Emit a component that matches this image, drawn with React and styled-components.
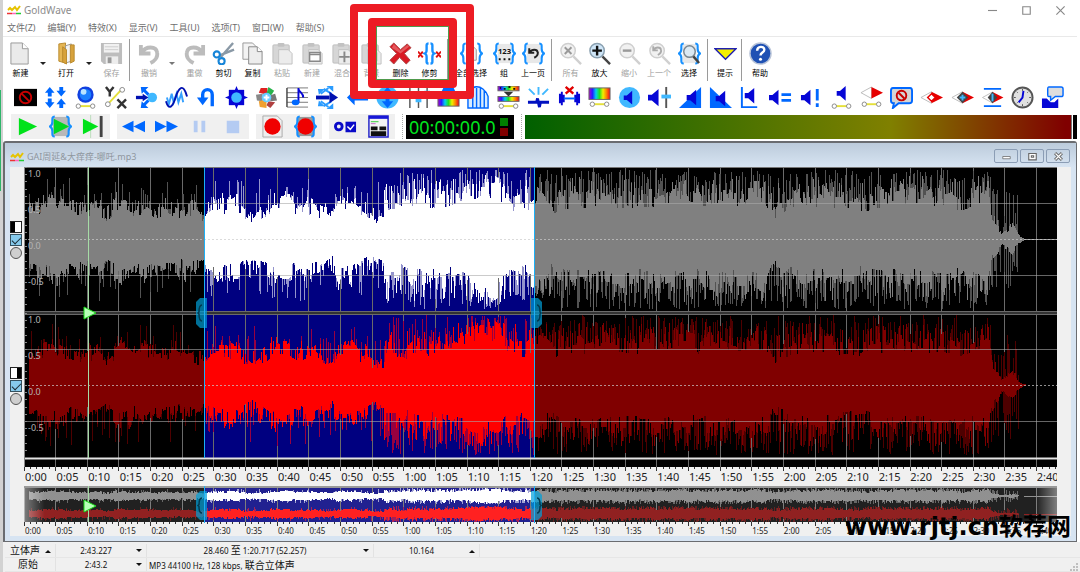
import React from 'react';
import styled, { createGlobalStyle } from 'styled-components';

const GlobalStyle = createGlobalStyle`
  * {
    box-sizing: border-box;
  }
  body {
    margin: 0;
    background: #fff;
    font-family: 'Noto Sans', 'Noto Sans CJK SC', sans-serif;
  }
  button, input {
    margin: 0;
    padding: 0;
    border: 0;
    background: none;
    font: inherit;
    color: inherit;
  }
`;

const Shell = styled.div`
  position: relative;
  display: flex;
  flex-direction: column;
  min-height: 100vh;
  padding-right: 3px;
  border-left: 3px solid #d2d2d2;
  background: #fff;
`;

const GreenEdge = styled.div`
  position: absolute;
  left: -3px;
  top: 90px;
  width: 1px;
  height: 101px;
  background: #2fb56a;
`;

const TitleBar = styled.header`
  display: flex;
  align-items: center;
  height: 20px;
  padding-left: 4px;
  color: #8c8c8c;
  font-size: 10px;
  line-height: 12px;
`;

const AppName = styled.span`
  flex: 1;
  padding-left: 3px;
`;

const CaptionButton = styled.button`
  display: flex;
  align-items: center;
  justify-content: center;
  width: 34px;
  height: 20px;
`;

const MenuBar = styled.nav`
  display: flex;
  gap: 12px;
  height: 17px;
  padding-left: 4px;
  border-bottom: 1px solid #e9e9e9;
  color: #6e6e6e;
  font-size: 9px;
  line-height: 16px;
`;

const MainTools = styled.div`
  display: flex;
  height: 46px;
  padding: 2px 3px;
`;

const Tool = styled.button`
  display: flex;
  flex-direction: column;
  align-items: center;
  gap: 3px;
  flex: none;
  width: ${p => p.$w}px;
  padding-top: 3px;
  color: ${p => (p.disabled ? '#a0a0a0' : '#000')};
  font-size: 8px;
  line-height: 10px;
  white-space: nowrap;
`;

const DropArrow = styled.button`
  flex: none;
  width: 16px;
  color: ${p => (p.disabled ? '#777' : '#222')};
`;

const Separator = styled.div`
  flex: none;
  width: 1px;
  height: 42px;
  margin: 0 4px 0 3px;
  background: #9a9a9a;
`;

const EffectTools = styled.div`
  display: grid;
  grid-template-columns: repeat(35, minmax(0, 1fr));
  height: 29px;
  padding: 0 9px 0 7px;
`;

const EffectButton = styled.button`
  display: flex;
  align-items: center;
  justify-content: center;
`;

const Transport = styled.div`
  display: flex;
  align-items: center;
  height: 29px;
  padding-left: 8px;
`;

const Group = styled.div`
  display: flex;
  flex: none;
  height: 25px;
  margin-right: 7px;
  background: #f0f0f0;
`;

const PlayButton = styled.button`
  display: flex;
  align-items: center;
  justify-content: center;
  width: 33px;
`;

const Grip = styled.div`
  flex: none;
  height: 25px;
  margin-right: 3px;
  border-left: 1px dotted #aaa;
`;

const Timer = styled.div`
  display: flex;
  align-items: center;
  justify-content: space-between;
  flex: none;
  width: 108px;
  height: 24px;
  margin-right: 7px;
  padding: 0 6px 0 3px;
  background: #000;
  color: #00e61e;
  font-size: 18px;
  line-height: 24px;
`;

const Lamps = styled.div`
  display: grid;
  gap: 2px;
`;

const Lamp = styled.i`
  width: 8px;
  height: 8px;
  background: ${p => p.$color};
`;

const Meter = styled.div`
  flex: 1;
  height: 24px;
  border-right: 1px solid #777;
  background: linear-gradient(90deg, #006000 0%, #808000 67%, #800000 99%);
`;

const ClipLamp = styled.div`
  width: 4px;
  height: 24px;
  margin-left: 1px;
  background: #000;
`;

const Child = styled.main`
  padding: 0 5px 5px;
  border: 2px solid #6a6c70;
  border-width: 2px 1px 1px 2px;
  border-radius: 3px 3px 0 0;
  background: #d7e4f2;
`;

const ChildTitle = styled.div`
  display: flex;
  align-items: center;
  height: 24px;
  margin: 0 -5px;
  padding: 4px 6px 0 5px;
  background: linear-gradient(#bccbdb, #d7e4f2);
  color: #8f969e;
  font-size: 9px;
  line-height: 12px;
`;

const FileName = styled.span`
  flex: 1;
  padding-left: 3px;
`;

const ChildButtons = styled.div`
  display: flex;
  gap: 2px;
  padding-bottom: 2px;
`;

const ChildButton = styled.button`
  display: flex;
  align-items: center;
  justify-content: center;
  width: 24px;
  height: 14px;
  border: 1px solid #8b9db5;
  border-radius: 2px;
`;

const Editor = styled.div`
  display: flex;
  padding-right: 14px;
  background: #f0f0f0;
`;

const Gutter = styled.div`
  flex: none;
  width: 14px;
`;

const ChannelSwitch = styled.div`
  display: flex;
  flex-direction: column;
  align-items: flex-start;
  justify-content: center;
  gap: 1px;
  height: 146px;
`;

const PanButton = styled.button`
  width: 12px;
  height: 12px;
  border: 1px solid #222;
  background: linear-gradient(90deg, ${p => p.$fill});
`;

const Check = styled.input`
  display: block;
  appearance: none;
  width: 12px;
  height: 12px;
  border: 1px solid #34505e;
  background: #86caec;
  &:checked::after {
    content: '';
    display: block;
    width: 8px;
    height: 4px;
    margin: 2px 0 0 1px;
    border: solid #1c2a32;
    border-width: 0 0 1px 1px;
    transform: rotate(-45deg);
  }
`;

const Dot = styled.input`
  display: block;
  appearance: none;
  width: 12px;
  height: 12px;
  border: 1px solid #555;
  border-radius: 50%;
  background: #cfcfcf;
`;

const Views = styled.div`
  flex: 1;
  min-width: 0;
`;

const WaveArea = styled.div`
  position: relative;
`;

const Wave = styled.svg`
  display: block;
  width: 100%;
  height: ${p => p.$h}px;
`;

const Scale = styled.div`
  position: absolute;
  left: 4px;
  top: ${p => p.$top}px;
  display: grid;
  grid-auto-rows: 36px;
  color: #b4b4b4;
  font-size: 9px;
  line-height: 14px;
`;

const Ruler = styled.div`
  display: grid;
  grid-template-columns: repeat(32, minmax(0, 50fr)) minmax(0, 32fr);
  padding-left: 1px;
  margin-bottom: ${p => (p.$small ? 0 : 4)}px;
  color: #222;
  font-size: ${p => (p.$small ? 8 : 11)}px;
  line-height: ${p => (p.$small ? 10 : 11)}px;
  white-space: nowrap;
`;

const Mark = styled.span`
  &:last-child {
    overflow-x: clip;
  }
`;

const StatusBar = styled.footer`
  flex: 1;
  padding: 2px 0 0 2px;
  margin-right: -3px;
  background: #f0f0f0;
  color: #111;
  font-size: 8px;
  line-height: 14px;
`;

const StatusRow = styled.div`
  display: flex;
  height: 14px;
  border-bottom: 1px solid #e6e6e6;
`;

const StatusCell = styled.button`
  display: flex;
  flex: none;
  align-items: center;
  justify-content: space-between;
  width: ${p => p.$w}px;
  padding-right: 4px;
  border-right: 1px solid #e2e2e2;
`;

const StatusText = styled.span`
  flex: 1;
  text-align: ${p => p.$align || 'center'};
`;

const Large = styled.span`
  font-size: 10px;
`;

const Resizer = styled.svg`
  position: absolute;
  right: 2px;
  bottom: 1px;
`;

const OuterFrame = styled.div`
  position: absolute;
  left: 347px;
  top: 4px;
  width: 124px;
  height: 95px;
  border: 8px solid #ed1c24;
  border-radius: 4px;
`;

const InnerFrame = styled.div`
  position: absolute;
  left: 365px;
  top: 18px;
  width: 89px;
  height: 70px;
  border: 8px solid #ed1c24;
  border-radius: 4px;
  &::after {
    content: '';
    position: absolute;
    inset: 0;
    border: 1px solid #4f9a4c;
  }
`;

const Watermark = styled.div`
  position: absolute;
  right: 9px;
  bottom: 27px;
  color: #000;
  font: bold 24px/36px 'DejaVu Sans', 'Noto Sans CJK SC', sans-serif;
`;

const B = '#0068ff';
const D = '#0606d6';
const L = '#40b8ff';

const Icon = ({ size = 23, children, ...rest }) => (
  <svg width={size} height={size} viewBox="0 0 24 24" fill="none" aria-hidden="true" {...rest}>{children}</svg>
);

const Logo = () => (
  <svg width="14" height="10" viewBox="0 0 14 10" fill="none" aria-hidden="true">
    <path d="M1 5l2-2 2 2 3-3 2 3 3-4" stroke="#e6c300" strokeWidth="2" />
    <path d="M0 8.500h5" stroke="#e33" strokeWidth="1.500" />
    <path d="M5 8.500h4" stroke="#f6b" strokeWidth="1.500" />
    <path d="M9 8.500h5" stroke="#2c3" strokeWidth="1.500" />
  </svg>
);

const Triangle = ({ up }) => (
  <svg width="6" height="4" viewBox="0 0 6 4" aria-hidden="true">
    <path d={up ? 'M0 4l3-3 3 3z' : 'M0 0h6L3 3z'} fill="currentColor" />
  </svg>
);

const Speaker = ({ x = 0, y = 0, s = 1 }) => (
  <path transform={`translate(${x} ${y}) scale(${s})`} d="M0 6h4l7-6v18l-7-6H0z" fill={D} />
);

const Braces = ({ color = '#1690ff' }) => (
  <path d="M6 1.500C3 1.500 3.500 4 3.500 7S3 11 1 12c2 1 2.500 2 2.500 5S3 22.500 6 22.500M18 1.500c3 0 2.500 2.500 2.500 5.500S21 11 23 12c-2 1-2.500 2-2.500 5s.5 5.500-2.500 5.500" stroke={color} strokeWidth="2.200" />
);

const Slider = ({ y = 21, x = 3 }) => (
  <g>
    <path d={`M${x + 3} ${y}h12`} stroke="#e5e03a" strokeWidth="2" />
    <circle cx={x + 1.500} cy={y} r="2.300" fill="#fff" stroke="#888" />
    <circle cx={x + 16.500} cy={y} r="2.300" fill="#fff" stroke="#888" />
  </g>
);

const Spectrum = ({ id, y, h }) => (
  <g>
    <defs>
      <linearGradient id={id}>
        {['#b000d0', '#2020ff', '#00d0f0', '#20e020', '#f0f000', '#ff8000', '#f00020'].map((c, i) => (
          <stop key={c} offset={i / 6} stopColor={c} />
        ))}
      </linearGradient>
    </defs>
    <rect x="1" y={y} width="22" height={h} fill={`url(#${id})`} stroke="#666" />
  </g>
);

const Clipboard = ({ children }) => (
  <Icon>
    <rect x="2" y="3" width="17" height="19" rx="1" fill="#d6d6d6" stroke="#bdbdbd" />
    <rect x="7" y="1" width="7" height="4" rx="1" fill="#c2c2c2" />
    <path d="M8 8h10l4 4v11H8z" fill="#ececec" stroke="#c0c0c0" />
    {children}
  </Icon>
);

const Magnifier = ({ off, children }) => (
  <Icon>
    <path d="M15 15l8 8" stroke={off ? '#d0d0d0' : '#444'} strokeWidth="2.500" />
    <circle cx="9.500" cy="9" r="7.500" fill={off ? '#f1f1f1' : '#cfe6f8'} stroke={off ? '#cfcfcf' : '#8aa0b0'} strokeWidth="1.500" />
    {children}
  </Icon>
);

const No = ({ x, y, r }) => (
  <g stroke="#c80000" strokeWidth="2">
    <circle cx={x} cy={y} r={r} />
    <path d={`M${x - r + 2} ${y - r + 2}l${2 * r - 4} ${2 * r - 4}`} />
  </g>
);

const Undo = ({ color = '#bcbcbc' }) => (
  <path d="M3 3v9h10M4 11C8 4 19 4 20 11c1 5-3 9-7 11" stroke={color} strokeWidth="4" />
);

const icons = {
  fresh: <Icon><path d="M2 1h12l6 6v16H2z" fill="#eaeaea" stroke="#999" /><path d="M14 1v6h6" fill="#fff" stroke="#999" /></Icon>,
  open: <Icon><path d="M4 2l7-1v21l-7-2z" fill="#e5b654" stroke="#b98a2d" /><path d="M11 4l6-2v18l-6 2z" fill="#f3f3f3" stroke="#999" /><path d="M16 3h4v17l-4 2zM8 5l4 3v15l-4-2z" fill="#d7a23c" stroke="#b98a2d" /></Icon>,
  save: <Icon><path d="M1 1h22v22H4l-3-3z" fill="#bdbdbd" /><path d="M4 2h16v9H4z" fill="#f1f1f1" /><path d="M5 5h14M5 8h14" stroke="#ccc" /><path d="M6 15h13v8H6z" fill="#ededed" /><path d="M8 16h4v6H8z" fill="#999" /></Icon>,
  undo: <Icon><Undo /></Icon>,
  redo: <Icon><g transform="translate(24 0) scale(-1 1)"><Undo /></g></Icon>,
  cut: <Icon><path d="M22 1L9 16M23 8L8 14" stroke="#8a99a6" strokeWidth="2.500" /><circle cx="5" cy="13" r="3.200" stroke="#1685d8" strokeWidth="2.200" /><circle cx="10" cy="20" r="3.200" stroke="#1685d8" strokeWidth="2.200" /></Icon>,
  copy: <Icon><path d="M2 1h10l4 4v13H2z" fill="#f3f3f3" stroke="#999" /><path d="M8 5h9l5 5v13H8z" fill="#ededed" stroke="#888" /><path d="M17 5v5h5" fill="#fff" stroke="#888" /></Icon>,
  paste: <Clipboard />,
  pasteNew: <Clipboard><path d="M9 11h11v9H9zM9 13h11" fill="#fff" stroke="#888" strokeWidth="1.500" /></Clipboard>,
  mix: <Clipboard><path d="M14 10v11M8.500 15.500h11" stroke="#888" strokeWidth="2" /></Clipboard>,
  back: <Clipboard><path d="M11 11v9M14 13v5M17 11v9" stroke="#999" strokeWidth="2" /></Clipboard>,
  remove: <Icon><path d="M5 1l7 7 7-6 4 4-7 6 6 7-4 4-7-7-6 7-4-4 7-7-7-7z" fill="#d91a24" stroke="#a44" /><path d="M5 2l7 7 7-6 2 2-9 7-9-6z" fill="#ec8080" opacity=".6" /></Icon>,
  trim: <Icon><path d="M11 1.500C8.500 1.500 9 3 9 6.500S9 11 7 12c2 1 2 2 2 5.500s-.5 5 2 5M13 1.500c2.500 0 2 1.500 2 5s0 4.500 2 5.500c-2 1-2 2-2 5.500s.5 5-2 5" stroke="#1690ff" strokeWidth="2.500" /><path d="M0 10l5 6M5 10l-5 6M19 10l5 6M24 10l-5 6" stroke="#e01010" strokeWidth="2" /></Icon>,
  all: <Icon><Braces /><path d="M7 5h7l3 3v11H7z" fill="#eee" stroke="#999" /></Icon>,
  set: <Icon><rect x="5" y="2" width="14" height="20" fill="#e8e8e8" /><Braces /><text x="12" y="12" textAnchor="middle" fontSize="8" fontWeight="bold" fill="#111">123</text><path d="M6 18h2M11 18h2M16 18h2" stroke="#111" strokeWidth="2" /></Icon>,
  prev: <Icon><rect x="5" y="2" width="14" height="20" fill="#e8e8e8" /><Braces /><g transform="translate(6 5) scale(.52)"><Undo color="#222" /></g></Icon>,
  zoomAll: <Magnifier off><path d="M6 5.500l7 7M13 5.500l-7 7" stroke="#999" strokeWidth="2" /></Magnifier>,
  zoomIn: <Magnifier><path d="M9.500 4v10M4.500 9h10" stroke="#111" strokeWidth="2.500" /></Magnifier>,
  zoomOut: <Magnifier off><path d="M5 9h9" stroke="#999" strokeWidth="2.500" /></Magnifier>,
  zoomPrev: <Magnifier off><g transform="translate(4 3) scale(.48)"><Undo color="#aaa" /></g></Magnifier>,
  zoomSel: <Icon><rect x="5" y="2" width="14" height="20" fill="#e8e8e8" /><Braces /><circle cx="12" cy="10" r="6" fill="#dbe9f3" stroke="#78858f" strokeWidth="1.500" /><path d="M16 15l6 7" stroke="#444" strokeWidth="2.500" /></Icon>,
  cue: <Icon><path d="M1 7h22L12 18z" fill="#f5f000" stroke="#2020b0" strokeWidth="1.500" /></Icon>,
  help: <Icon><circle cx="12" cy="12" r="11" fill="#1f51b4" stroke="#b9c4d8" strokeWidth="1.500" /><path d="M8.500 9c0-5 7.500-5 7.500-1 0 3-4 3-4 6" stroke="#fff" strokeWidth="2.500" /><circle cx="12" cy="18" r="1.600" fill="#fff" /></Icon>,
};

const mainTools = [
  ['新建', 'fresh', 29], 'arrow', ['打开', 'open', 30], 'arrow', ['保存', 'save', 29, true], '|',
  ['撤销', 'undo', 30, true], 'arrowOff', ['重做', 'redo', 29, true], ['剪切', 'cut', 29], ['复制', 'copy', 29],
  ['粘贴', 'paste', 30, true], ['新建', 'pasteNew', 30, true], ['混合', 'mix', 30, true], ['背景', 'back', 29, true],
  ['删除', 'remove', 29], ['修剪', 'trim', 29], '|',
  ['全部选择', 'all', 38], ['组', 'set', 28], ['上一页', 'prev', 30], '|',
  ['所有', 'zoomAll', 29, true], ['放大', 'zoomIn', 29], ['缩小', 'zoomOut', 30, true], ['上一个', 'zoomPrev', 30, true], ['选择', 'zoomSel', 30], '|',
  ['提示', 'cue', 26], '|', ['帮助', 'help', 28],
];

const Eye = ({ y = 12, s = 1 }) => (
  <g transform={`translate(12 ${y}) scale(${s})`}>
    <path d="M-11 0L0-6v12z" fill="#fff" stroke="#bbb" />
    <path d="M0-6L12 0 0 6z" fill="#e60000" />
  </g>
);

const effects = [
  ['Censor', <><rect x="0" y="3" width="24" height="18" fill="#000" /><No x={12} y={12} r={6} /></>],
  ['Compressor', <path d="M6 1l5 6H8v4H4V7H1zM18 11l5-6h-3V1h-4v4h-3zM6 23l5-6H8v-4H4v4H1zM18 13l5 6h-3v4h-4v-4h-3z" fill={B} />],
  ['Doppler', <><circle cx="12" cy="9" r="8.500" fill="#1040e0" /><circle cx="12" cy="9" r="6" fill="#1a80ff" /><circle cx="10" cy="6" r="3" fill="#b8e4ff" /><Slider /></>],
  ['Dynamics', <><path d="M2 1l4 5 4-5M6 6v5M14 14l9 9M23 14l-9 9" stroke="#333" strokeWidth="2.500" /><path d="M4 19L18 4" stroke="#e5e03a" strokeWidth="2" /><circle cx="19" cy="4" r="2.500" fill="#fff" stroke="#888" /><circle cx="4" cy="19" r="2.500" fill="#fff" stroke="#888" /></>],
  ['Echo', <><circle cx="18" cy="12" r="5" fill={L} /><path d="M14 9L9 4M14 15l-5 5" stroke={B} strokeWidth="3" /><path d="M6 1h8l-7 7zM6 23h8l-7-7z" fill={B} /><path d="M1 12h8" stroke="#0010b0" strokeWidth="3.500" /><path d="M8 8l6 4-6 4z" fill="#0010b0" /></>],
  ['Flanger', <><path d="M2 12l2 7 3-11 2 9 3-9 2 9 3-9 2 9" stroke="#35a0ff" strokeWidth="2" /><path d="M1 16c3 10 7 6 10-4S19-4 23 11" stroke="#0010b0" strokeWidth="2" /></>],
  ['Reverse', <><path d="M18 21V9c0-7-10-7-10 0v6" stroke={B} strokeWidth="3.500" /><path d="M2 12h12l-6 8z" fill={B} /></>],
  ['Mechanize', <><path d="M4 4h16v16H4z" fill={D} /><path d="M12 0l3.500 8.500L24 12l-8.500 3.500L12 24l-3.500-8.500L0 12l8.500-3.500z" fill={D} /><circle cx="12" cy="12" r="5.500" fill={L} /></>],
  ['Plugin', <><path d="M6 2h7v7L4 7z" fill="#e02020" /><path d="M14 1l6 4-4 6-4-3z" fill="#27b34b" /><path d="M1 9l7-1v8l-6-1z" fill="#888" /><path d="M4 16l8-2v9l-7-1z" fill="#f0a030" /><path d="M21 8l2 7-7 1-1-6z" fill="#777" /><path d="M14 16l7 1-5 6-4-3z" fill="#b04040" /><circle cx="12" cy="12" r="5" fill="#6cf" /><path d="M12 9v6M9 12h6" stroke="#fff" strokeWidth="2" /></>],
  ['Pitch', <><path d="M1 2h22M1 7h22M1 12h22M1 17h22M1 22h22" stroke="#777" /><path d="M1 2v20" stroke="#444" strokeWidth="1.500" /><path d="M13 2v15M13 3c1 4 5 4 5 9" stroke={D} strokeWidth="2" /><ellipse cx="10" cy="17" rx="4" ry="3" fill={B} /></>],
  ['Reverb', <><path d="M5 8l8-6M5 16l8 6M8 3l8 5M8 21l8-5" stroke="#2a9cff" strokeWidth="2" /><path d="M11 0h7v6zM11 24h7v-6zM2 3h7l-6 6zM2 21h7l-6-6z" fill="#2a9cff" /><path d="M0 12h14" stroke="#0010b0" strokeWidth="4" /><path d="M14 6l9 6-9 6z" fill="#0010b0" /></>],
  ['Stereo', <path d="M1 12l8-8v5h14v6H9v5z" fill={B} />],
  ['Offset', <><circle cx="12" cy="12" r="11.500" fill={L} /><path d="M12 1l6 7h-4v8h4l-6 7-6-7h4V8H6z" fill={B} /></>],
  ['Equalizer', <><path d="M3 1v22M12 1v22M21 1v22" stroke="#555" strokeWidth="1.500" /><path d="M0 7h6v4H0zM9 13h6v4H9zM18 5h6v4h-6z" fill={L} /></>],
  ['Filter', <><path d="M2 12L7 1h10l5 11z" fill={B} /><Spectrum id="sp1" y={13} h={8} /></>],
  ['Parametric', <path d="M1 23V14C1-3 17-3 22 11v12zM6 4v19M10 2v21M14 2v21M18 5v18" fill="#d8ecff" stroke={B} strokeWidth="1.500" />],
  ['Noise', <><Spectrum id="sp2" y={0} h={5} /><path d="M3 2h1M7 3h2M12 1h2M17 3h2" stroke="#111" strokeWidth="2" /><path d="M7 6h10l-5 5z" fill="#333" /><Spectrum id="sp3" y={11} h={5} /><Slider /></>],
  ['Pop click', <><path d="M1 17h9l1-4 2 9 1-5h9" stroke="#0010c0" strokeWidth="3" /><path d="M12 9V1M8 9L2 3M16 9l6-6" stroke={L} strokeWidth="2" /></>],
  ['Silence reduction', <><path d="M1 13h4M19 13h4M2 8v10M4 6v14M6 9v8M22 8v10M20 6v14M18 9v8" stroke={D} strokeWidth="2" /><path d="M6 13h12" stroke={B} strokeWidth="2" /><path d="M8 1l8 7M16 1l-8 7" stroke="#e00000" strokeWidth="2.500" /></>],
  ['Smoother', <><Spectrum id="sp4" y={2} h={12} /><Slider y={19} /></>],
  ['Channel mixer', <><circle cx="12" cy="12" r="11" fill={L} /><Speaker x={6} y={5} s={0.8} /></>],
  ['Volume', <><Speaker y={3} /><path d="M19 1v22" stroke="#555" strokeWidth="2" /><path d="M14 9h10v4H14z" fill={L} /></>],
  ['Fade in', <><path d="M0 23L23 1v22z" fill={B} /><Speaker x={8} y={4} s={0.9} /></>],
  ['Fade out', <><path d="M1 1v22h23z" fill={B} /><Speaker x={7} y={5} s={0.9} /></>],
  ['Shape volume', <><path d="M3 1v21h16" stroke={B} strokeWidth="2" /><Speaker x={6} y={2} s={0.9} /></>],
  ['Match volume', <><Speaker y={4} s={0.9} /><path d="M13 9h10M13 15h10" stroke={B} strokeWidth="3" /></>],
  ['Maximize volume', <><Speaker x={1} y={4} s={0.9} /><path d="M18 3v12M18 18v4" stroke={B} strokeWidth="3" /></>],
  ['Auto gain', <><Speaker x={7} y={0} s={0.85} /><Slider /></>],
  ['Voice over', <><Eye y={7} /><Slider y={19} /></>],
  ['Speech', <><path d="M3 2h18q2 0 2 3v10q0 3-3 3H9l-6 5 1-5q-3 0-3-3V5q0-3 2-3z" fill="#d5d5d5" stroke={B} strokeWidth="2" /><No x={12} y={10} r={5} /></>],
  ['Pan', <><Eye /><path d="M12 8l4 4-4 4-4-4z" fill="#fff" stroke="#e60000" strokeWidth="1.500" /></>],
  ['Center', <><Eye /><path d="M12 6l6 6-6 6-6-6z" fill="#444" /><path d="M12 9v6M9 12h6" stroke={L} strokeWidth="2" /></>],
  ['Balance', <><path d="M3 3h18M3 21h18" stroke={B} strokeWidth="2" /><Eye s={0.95} /><path d="M12 6l5 6-5 6-5-6z" fill="#444" /><path d="M12 8v8" stroke={L} strokeWidth="2" /></>],
  ['Time warp', <><circle cx="12" cy="12" r="10.500" fill="#e0e0e0" stroke="#555" strokeWidth="2" /><path d="M12 3v2M12 19v2M3 12h2M19 12h2M6 6l1 1M18 6l-1 1M6 18l1-1M18 18l-1-1" stroke="#555" /><path d="M13 5l-1 7-4 5" stroke={D} strokeWidth="2" /></>],
  ['Comment', <><path d="M1 13h5l4 4h4l4-4v10H1z" fill={D} /><path d="M8 1h13q2 0 2 2v6q0 2-2 2h-6l-5 4v-4H8q-1 0-1-2V3q0-2 1-2z" fill="#ddd" stroke={B} strokeWidth="1.500" /></>],
];

const play = <path d="M3 3l19 9-19 9z" fill="#00e21a" />;
const transport = [
  [
    ['Play', play],
    ['Play selection', <><rect x="4" y="2" width="17" height="20" fill="#b8b8b8" /><Braces /><path d="M5 4l16 8-16 8z" fill="#00d820" /></>],
    ['Play to end', <><path d="M9 0v24" stroke="#bdb" strokeWidth="1" /><path d="M1 4l16 8-16 8z" fill="#00e21a" /><path d="M20 1v22" stroke="#444" strokeWidth="3" /></>],
  ],
  [
    ['Rewind', <path d="M12 6v12L0 12zM24 6v12l-12-6z" fill={B} />],
    ['Fast forward', <path d="M0 6v12l12-6zM12 6v12l12-6z" fill={B} />],
    ['Pause', <path d="M6 6h4v12H6zM14 6h4v12h-4z" fill="#b4cbf2" />],
    ['Stop', <path d="M6 6h13v13H6z" fill="#b4cbf2" />],
  ],
  [
    ['Record', <><path d="M2 1h15l5 5v17H2z" fill="#eee" stroke="#aaa" /><circle cx="12" cy="12" r="8.500" fill="#f00000" /></>],
    ['Record selection', <><rect x="4" y="2" width="17" height="20" fill="#999" /><Braces /><circle cx="12" cy="12" r="8.500" fill="#f00000" /></>],
  ],
  [
    ['Options', <><circle cx="5" cy="12" r="3.500" stroke="#0a0ac8" strokeWidth="3" /><path d="M12 7h11v11H12z" fill="#0a0ac8" /><path d="M14 12l3 3 4-5" stroke="#fff" strokeWidth="1.500" /></>],
    ['Control window', <><path d="M2 1h20v22H2z" fill="#f4f4f4" stroke="#2222c8" strokeWidth="1.500" /><path d="M2 1h20v3H2z" fill="#1818d8" /><path d="M4 7h8" stroke="#3c3" /><path d="M4 9h5" stroke="#c6c" /><path d="M4 12h7v4H4zM13 12h7v4h-7zM4 17h16v5H4z" fill="#111" /></>],
  ],
];

const menus = ['文件(Z)', '编辑(Y)', '特效(X)', '显示(V)', '工具(U)', '选项(T)', '窗口(W)', '帮助(S)'];

const marks = Array.from({ length: 33 }, (_, i) => {
  const s = i * 5;
  return `${Math.floor(s / 60)}:${String(s % 60).padStart(2, '0')}`;
});

// the wave is 163.227 seconds long, drawn one column per unit
const WIDTH = 1033;
const SECOND = WIDTH / 163.227;
const SEL_START = 180;
const SEL_END = 510;
const CURSOR = 64;

// [column, loudness] of the solid part of the wave
const loudness = [
  [5, .42], [16, .46], [28, .5], [46, .42], [56, .38], [71, .46], [82, .34], [94, .5], [101, .5], [111, .4], [121, .5], [131, .38],
  [141, .43], [154, .37], [166, .42], [179, .28], [186, .42], [201, .46], [212, .5], [219, .38], [229, .27], [238, .36], [248, .5],
  [264, .52], [276, .38], [286, .46], [294, .4], [308, .3], [314, .52], [326, .52], [334, .4], [352, .28], [359, .3], [361, .52],
  [371, .52], [382, .44], [388, .56], [401, .6], [407, .46], [413, .6], [426, .54], [438, .6], [456, .7], [471, .72], [481, .6],
  [490, .48], [501, .5], [510, .6], [516, .64], [528, .45], [536, .55], [576, .56], [616, .56], [656, .62], [676, .56], [698, .62],
  [716, .56], [741, .64], [748, .34], [756, .46], [776, .58], [796, .58], [836, .5], [856, .56], [876, .6], [896, .56], [916, .6],
  [938, .5], [951, .6], [964, .66], [968, .3], [973, .22], [977, .07], [982, .12], [988, .2], [994, .06], [1000, .01], [1004, 0],
];

const loudAt = x => {
  const n = loudness.findIndex(p => p[0] >= x);
  if (n < 0) return 0;
  if (n === 0) return loudness[0][1];
  const [x0, a] = loudness[n - 1];
  const [x1, b] = loudness[n];
  return a + ((b - a) * (x - x0)) / (x1 - x0);
};

const makeWave = start => {
  let seed = start;
  const rand = () => {
    seed = (seed * 16807) % 2147483647;
    return seed / 2147483647;
  };
  const columns = [];
  const held = [0.5, 0.5];
  for (let x = 5; x < 1004; x++) {
    const level = loudAt(x);
    const quiet = x < 360;
    const cap = x > 994 ? level : x > 966 ? .8 : quiet ? .86 : .97;
    const side = (n, k) => {
      if (rand() < .55) held[n] = rand();
      const floor = level * (k + held[n] * .5);
      const body = x < 966 && rand() < .26 ? floor + (cap - floor) * rand() * (quiet ? .35 : .7) : floor;
      const jump = rand() < (quiet ? .5 : .6) ? Math.pow(rand(), quiet ? 3.5 : .9) : 0;
      return [body, Math.max(body, floor + (cap - floor) * jump)];
    };
    columns.push([x, side(0, .76), side(1, .7)]);
  }
  return columns;
};

const wavePath = (wave, cy, amp, layer) =>
  wave.map(([x, up, down]) => `M${x}.5 ${(cy - up[layer] * amp).toFixed(1)}V${(cy + down[layer] * amp).toFixed(1)}`).join('');

const left = makeWave(1337);
const right = makeWave(90210);

const Channel = ({ wave, cy, amp, clip, peak, body }) => (
  <g clipPath={`url(#${clip})`} strokeWidth="1" shapeRendering="crispEdges">
    <path d={wavePath(wave, cy, amp, 1)} stroke={peak} />
    <path d={wavePath(wave, cy, amp, 0)} stroke={body} />
  </g>
);

const Waves = ({ top, bottom, amp, id }) => (
  <g>
    <clipPath id={`${id}-sel`}><rect x={SEL_START} width={SEL_END - SEL_START} height="300" /></clipPath>
    <clipPath id={`${id}-out`}><path d={`M0 0H${SEL_START}V300H0zM${SEL_END} 0H${WIDTH}V300H${SEL_END}z`} /></clipPath>
    <Channel wave={left} cy={top} amp={amp} clip={`${id}-out`} peak="#525252" body="#808080" />
    <Channel wave={left} cy={top} amp={amp} clip={`${id}-sel`} peak="#9494cc" body="#fff" />
    <Channel wave={right} cy={bottom} amp={amp} clip={`${id}-out`} peak="#4e0000" body="#800000" />
    <Channel wave={right} cy={bottom} amp={amp} clip={`${id}-sel`} peak="#980040" body="#f00" />
  </g>
);

const Ticks = ({ y }) => (
  <path
    d={Array.from({ length: 164 }, (_, s) => `M${Math.floor(s * SECOND)}.5 ${y}v${s % 5 ? 2 : 4}`).join('')}
    stroke="#333"
  />
);

const GridLines = ({ h }) => (
  <path d={marks.map((_, i) => `M${Math.floor(i * 5 * SECOND)}.5 0V${h}`).join('')} stroke="#6a6a6a" shapeRendering="crispEdges" />
);

const Handles = ({ y, h }) => (
  <g>
    <path d={`M${SEL_START + 3} ${y}h-7l-4 4v${h - 8}l4 4h7z`} fill="#00a0d8" opacity=".7" />
    <path d={`M${SEL_END - 3} ${y}h7l4 4v${h - 8}l-4 4h-7z`} fill="#00a0d8" opacity=".7" />
    <path d={`M${SEL_START - 2} ${y + 7}q-3 0-3 ${h / 2 - 8}l-1 1 1 1q0 ${h / 2 - 8} 3 ${h / 2 - 8}M${SEL_END + 3} ${y + 7}q3 0 3 ${h / 2 - 8}l1 1-1 1q0 ${h / 2 - 8}-3 ${h / 2 - 8}`} fill="none" stroke="#023a50" strokeWidth="1.500" />
    <path d={`M${SEL_START}.5 0V${h > 29 ? 291 : 37}M${SEL_END}.5 0V${h > 29 ? 291 : 37}`} stroke="#1cb0f6" />
  </g>
);

const Cursor = ({ y, h }) => (
  <g>
    <path d={`M${CURSOR}.5 0V${h}`} stroke="#a6dca6" />
    <path d={`M${CURSOR - 4} ${y - 6}l12 6-12 6z`} fill="#b8ffb8" stroke="#18d818" />
  </g>
);

const MainWave = () => (
  <Wave $h={304} viewBox={`0 0 ${WIDTH} 304`} preserveAspectRatio="none" role="img" aria-label="Waveform">
    <rect width={WIDTH} height="300" fill="#000" />
    <rect x={SEL_START} width={SEL_END - SEL_START} height="291" fill="#000080" />
    <GridLines h={300} />
    <Waves id="main" top={72.5} bottom={218} amp={72} />
    <path d={`M0 36.5H${WIDTH}M0 108.500H${WIDTH}M0 182.500H${WIDTH}M0 254.500H${WIDTH}`} stroke="#aaa" opacity=".6" />
    <path d={`M1000 72.500H${WIDTH}`} stroke="#999" />
    <path d={`M0 72.500H${WIDTH}M0 218.500H${WIDTH}`} stroke="#ccc" strokeDasharray="2 2" opacity=".7" />
    <path d={`M0 .5H${WIDTH}`} stroke="#777" />
    <rect y="144" width={WIDTH} height="4" fill="#333" />
    <path d={`M0 144.500H${WIDTH}M0 147.500H${WIDTH}`} stroke="#6a6a6a" />
    <path d={`M0 291.500H${WIDTH}`} stroke="#e4e4e4" strokeWidth="2" />
    <path d="M.5 0V300" stroke="#888" />
    <path
      d={Array.from({ length: 40 }, (_, i) => `M1 ${Math.round(i * 7.2 + (i > 19 ? 2 : 0))}.5h2`).join('')}
      stroke="#888"
    />
    <rect y="300" width={WIDTH} height="4" fill="#f0f0f0" />
    <Ticks y={300} />
    <Cursor y={146} h={291} />
    <Handles y={131} h={30} />
  </Wave>
);

const Overview = () => (
  <Wave $h={40} viewBox={`0 0 ${WIDTH} 40`} preserveAspectRatio="none" role="img" aria-label="Overview">
    <defs>
      <linearGradient id="edges">
        <stop offset="0" stopColor="#fff" stopOpacity=".5" />
        <stop offset=".02" stopColor="#fff" stopOpacity=".13" />
        <stop offset=".98" stopColor="#fff" stopOpacity=".13" />
        <stop offset="1" stopColor="#fff" stopOpacity=".5" />
      </linearGradient>
    </defs>
    <rect width={WIDTH} height="36" fill="#000" />
    <rect x={SEL_START} width={SEL_END - SEL_START} height="36" fill="#000080" />
    <GridLines h={36} />
    <Waves id="mini" top={10} bottom={28} amp={8.5} />
    <path d={`M1000 10.500H${WIDTH}`} stroke="#808080" />
    <path d={`M1000 28.500H${WIDTH}`} stroke="#800000" />
    <rect width={WIDTH} height="36" fill="url(#edges)" />
    <rect width={WIDTH} height="2" fill="#999" />
    <rect y="36" width={WIDTH} height="4" fill="#f0f0f0" />
    <Ticks y={36} />
    <Cursor y={20} h={36} />
    <Handles y={5} h={29} />
  </Wave>
);

const Times = ({ small }) => (
  <Ruler $small={small}>
    {marks.map(m => <Mark key={m}>{m}</Mark>)}
  </Ruler>
);

const Levels = ({ top }) => (
  <Scale $top={top}>
    {['1.0', '0.5', '0.0', '-0.5'].map(v => <span key={v}>{v}</span>)}
  </Scale>
);

const ChannelControls = ({ name, fill }) => (
  <ChannelSwitch>
    <PanButton type="button" aria-label={`${name} side`} $fill={fill} />
    <Check type="checkbox" defaultChecked aria-label={`${name} channel`} />
    <Dot type="radio" name={name} aria-label={`${name} solo`} />
  </ChannelSwitch>
);

const renderTool = (tool, i) => {
  if (tool === '|') return <Separator key={i} />;
  if (tool === 'arrow' || tool === 'arrowOff') {
    return <DropArrow key={i} type="button" aria-label="More" disabled={tool === 'arrowOff'}><Triangle /></DropArrow>;
  }
  const [label, icon, w, off] = tool;
  return <Tool key={i} type="button" $w={w} disabled={off}>{icons[icon]}{label}</Tool>;
};

const App = () => (
  <>
    <GlobalStyle />
    <Shell>
      <TitleBar>
        <Logo />
        <AppName>GoldWave</AppName>
        <CaptionButton type="button" aria-label="Minimize"><Icon size={9}><path d="M0 12h24" stroke="#888" strokeWidth="3" /></Icon></CaptionButton>
        <CaptionButton type="button" aria-label="Maximize"><Icon size={9}><path d="M2 2h20v20H2z" stroke="#888" strokeWidth="3" /></Icon></CaptionButton>
        <CaptionButton type="button" aria-label="Close"><Icon size={9}><path d="M1 1l22 22M23 1L1 23" stroke="#888" strokeWidth="3" /></Icon></CaptionButton>
      </TitleBar>
      <MenuBar>
        {menus.map(m => <button type="button" key={m}>{m}</button>)}
      </MenuBar>
      <MainTools>{mainTools.map(renderTool)}</MainTools>
      <EffectTools>
        {effects.map(([name, art]) => (
          <EffectButton type="button" key={name} aria-label={name}><Icon>{art}</Icon></EffectButton>
        ))}
      </EffectTools>
      <Transport>
        {transport.map((group, i) => (
          <Group key={i}>
            {group.map(([name, art]) => (
              <PlayButton type="button" key={name} aria-label={name}><Icon>{art}</Icon></PlayButton>
            ))}
          </Group>
        ))}
        <Grip />
        <Timer>
          00:00:00.0
          <Lamps>
            <Lamp $color="#008000" />
            <Lamp $color="#800000" />
          </Lamps>
        </Timer>
        <Grip />
        <Meter />
        <ClipLamp />
      </Transport>
      <Child>
        <ChildTitle>
          <Logo />
          <FileName>GAI周延&amp;大痒痒-哪吒.mp3</FileName>
          <ChildButtons>
            <ChildButton type="button" aria-label="Minimize file"><Icon size={9}><path d="M2 12h20v6H2z" fill="#fff" stroke="#666" strokeWidth="2" /></Icon></ChildButton>
            <ChildButton type="button" aria-label="Restore file"><Icon size={9}><path d="M2 4h20v17H2z" fill="#fff" stroke="#666" strokeWidth="3" /><path d="M9 10h6v4H9z" stroke="#666" strokeWidth="3" /></Icon></ChildButton>
            <ChildButton type="button" aria-label="Close file"><Icon size={9}><path d="M3 3l18 18M21 3L3 21" stroke="#666" strokeWidth="8" /><path d="M4 4l16 16M20 4L4 20" stroke="#fff" strokeWidth="3" /></Icon></ChildButton>
          </ChildButtons>
        </ChildTitle>
        <Editor>
          <Gutter>
            <ChannelControls name="left" fill="#000 40%, #fff 40%" />
            <ChannelControls name="right" fill="#fff 60%, #000 60%" />
          </Gutter>
          <Views>
            <WaveArea>
              <MainWave />
              <Levels top={0} />
              <Levels top={146} />
            </WaveArea>
            <Times />
            <Overview />
            <Times small />
          </Views>
        </Editor>
      </Child>
      <StatusBar>
        <StatusRow>
          <StatusCell type="button" $w={51}><StatusText><Large>立体声</Large></StatusText><Triangle up /></StatusCell>
          <StatusCell type="button" $w={91}><StatusText>2:43.227</StatusText><Triangle /></StatusCell>
          <StatusCell type="button" $w={227}><StatusText>28.460 <Large>至</Large> 1:20.717 (52.257)</StatusText><Triangle /></StatusCell>
          <StatusCell type="button" $w={106}><StatusText>10.164</StatusText><Triangle up /></StatusCell>
        </StatusRow>
        <StatusRow>
          <StatusCell type="button" $w={51}><StatusText><Large>原始</Large></StatusText></StatusCell>
          <StatusCell type="button" $w={91}><StatusText>2:43.2</StatusText><Triangle /></StatusCell>
          <StatusText $align="left">&nbsp;MP3 44100 Hz, 128 kbps, <Large>联合立体声</Large></StatusText>
        </StatusRow>
      </StatusBar>
      <Resizer width="8" height="8" viewBox="0 0 8 8" aria-hidden="true">
        <path d="M6 0h2v2H6zM3 3h2v2H3zM6 3h2v2H6zM0 6h2v2H0zM3 6h2v2H3zM6 6h2v2H6z" fill="#bfbfbf" />
      </Resizer>
      <GreenEdge />
      <OuterFrame />
      <InnerFrame />
      <Watermark>www.rjtj.cn软荐网</Watermark>
    </Shell>
  </>
);

export default App;
